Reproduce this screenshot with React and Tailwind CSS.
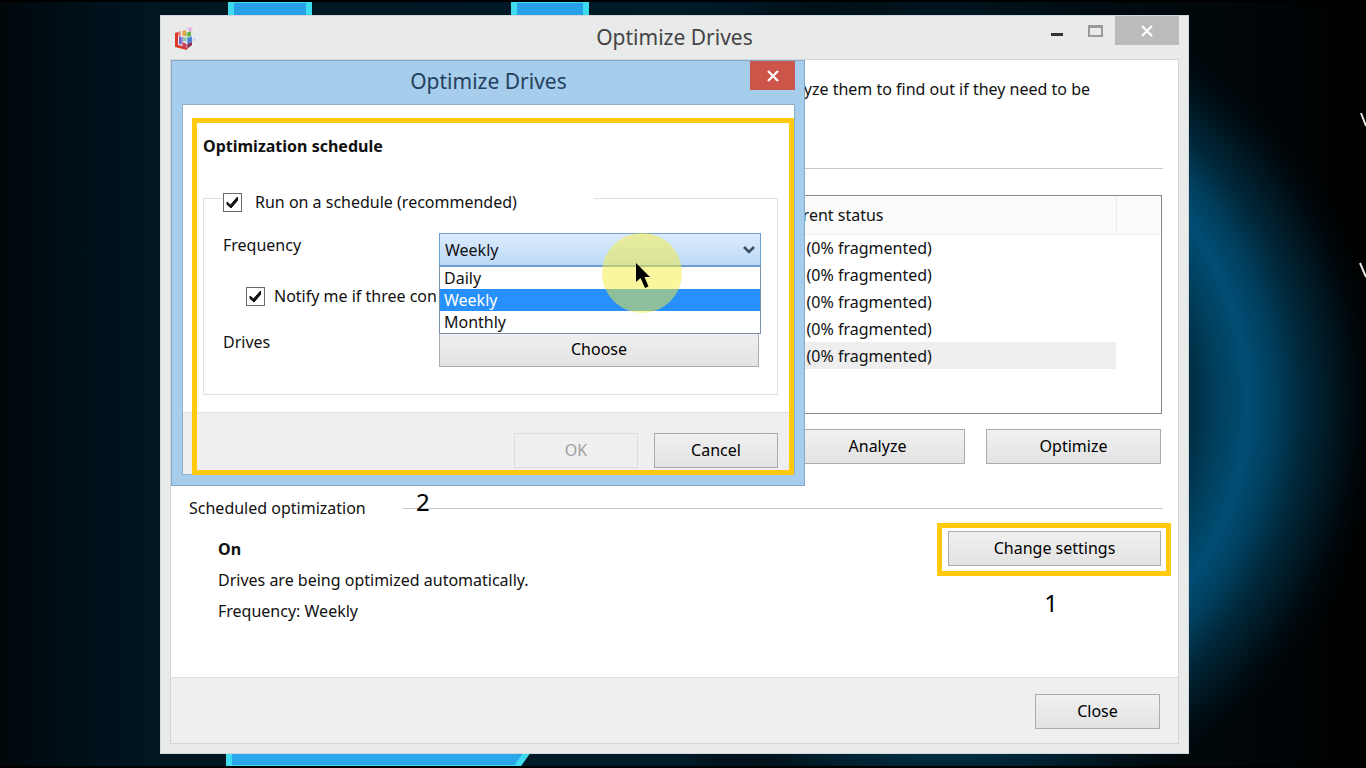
import React, { useState } from "react";

const drives = ["C", "D", "E", "F", "System"];
const frequencies = ["Daily", "Weekly", "Monthly"];

function PushButton({ className = "", children, ...props }) {
  return (
    <button
      className={`h-[35px] border border-[#acacac] bg-linear-to-b from-[#f0f0f0] to-[#e3e3e3] pb-[2px] text-center text-black disabled:border-[#dcdcdc] disabled:from-[#efefef] disabled:to-[#efefef] disabled:text-[#a0a0a0] ${className}`}
      {...props}
    >
      {children}
    </button>
  );
}

function CheckBox({ id, label, checked, onChange, className = "" }) {
  return (
    <div className={`flex items-center ${className}`}>
      <span className="relative block size-[19px]">
        <input
          id={id}
          type="checkbox"
          checked={checked}
          onChange={(e) => onChange(e.target.checked)}
          className="block size-[19px] appearance-none border border-[#6b6b6b] bg-white"
        />
        {checked && (
          <svg viewBox="0 0 19 19" className="pointer-events-none absolute inset-0">
            <path d="M4 9l3.500 3L14.500 4v3.500L8 15 4 11.500z" fill="#111" stroke="#111" />
          </svg>
        )}
      </span>
      <label htmlFor={id} className="whitespace-nowrap">
        {label}
      </label>
    </div>
  );
}

function Cross({ className }) {
  return (
    <svg viewBox="0 0 12 12" className={className}>
      <path d="M1 1l10 10M11 1L1 11" fill="none" stroke="currentColor" strokeWidth="2.200" />
    </svg>
  );
}

function DefragIcon() {
  return (
    <svg viewBox="0 0 24 24" className="size-6">
      <path d="M2 7l3-1v13l9 2v3L2 21z" fill="#d8392c" />
      <path d="M5 6l3-1v5l-3 1z" fill="#e8897c" />
      <path d="M6 10l4 1v8l-4-1z" fill="#6a62c8" />
      <path d="M9 5l4-1v6l-4 1z" fill="#e2a64a" />
      <path d="M13 7l5-2v6l-5 1z" fill="#62b04c" />
      <path d="M10 11l4 1v4l-4-1z" fill="#8cc8b0" />
      <path d="M14 12l5-2v6l-5 2z" fill="#4c7fd8" />
      <path d="M9 16l5 2v4l-5-1z" fill="#c2455c" />
      <path d="M14 18l5-2v3l-5 4z" fill="#8a2f58" />
      <path d="M5 10l14 1M9 5v15M14 7v15" stroke="#fff" strokeOpacity="0.600" fill="none" />
      <path d="M14 2l4-1 2 3-4 2z" fill="#e9b4e6" />
      <path d="M20 12l3 2-3 1z" fill="#b4cdf6" />
    </svg>
  );
}

function Wallpaper() {
  return (
    <svg
      className="absolute inset-0 h-full w-full"
      viewBox="0 0 1366 768"
      preserveAspectRatio="none"
      aria-hidden="true"
    >
      <defs>
        <linearGradient id="base">
          <stop offset="0" stopColor="#00070b" />
          <stop offset="0.060" stopColor="#001019" />
          <stop offset="0.120" stopColor="#001722" />
          <stop offset="0.500" stopColor="#001a28" />
          <stop offset="0.800" stopColor="#000c12" />
          <stop offset="1" stopColor="#000" />
        </linearGradient>
        <radialGradient id="ring" gradientUnits="userSpaceOnUse" cx="944" cy="402" r="440">
          <stop offset="0.450" stopColor="#001c2a" stopOpacity="0" />
          <stop offset="0.550" stopColor="#002a3e" />
          <stop offset="0.620" stopColor="#003f5c" />
          <stop offset="0.690" stopColor="#004d74" />
          <stop offset="0.750" stopColor="#003f5e" />
          <stop offset="0.820" stopColor="#002739" />
          <stop offset="0.900" stopColor="#00131c" />
          <stop offset="1" stopColor="#000508" stopOpacity="0" />
        </radialGradient>
      </defs>
      <rect width="1366" height="768" fill="url(#base)" />
      <rect width="1366" height="768" fill="url(#ring)" />
      <path d="M231 0h78v20h-78zM514 0h72v20h-72z" fill="#27a0e8" stroke="#3cdcec" strokeWidth="6" />
      <path d="M229 740h307l-20 28H229z" fill="#2ba6ea" stroke="#3fdcf0" strokeWidth="6" />
      <path d="M0 1h1366M0 767h1366" stroke="#000" strokeWidth="2" />
      <path d="M1361 113l5 13M1360 263l6 14" stroke="#e8e8e8" strokeWidth="2" />
    </svg>
  );
}

function ScheduleDialog() {
  const [enabled, setEnabled] = useState(true);
  const [notify, setNotify] = useState(true);
  const [frequency, setFrequency] = useState("Weekly");

  return (
    <section className="absolute left-0 top-0 flex h-[426px] w-[634px] flex-col border border-[#86a9c8] bg-[#a6cdec] pb-[10px] pl-[10px] pr-[9px]">
      <header className="relative flex h-[43px] justify-center pt-[6px]">
        <h2 className="text-[21px] leading-7 text-[#24405c]">Optimize Drives</h2>
        <button
          aria-label="Close dialog"
          className="absolute right-0 top-0 flex h-[29px] w-[45px] items-center justify-center bg-[#cc5549] text-white"
        >
          <Cross className="size-3" />
        </button>
      </header>

      <div className="flex flex-1 flex-col border border-[#8db0cd] bg-white">
        <div className="flex-1 pl-5 pr-4 pt-[29px]">
          <h3 className="font-bold leading-6">Optimization schedule</h3>

          <div className="mt-10 h-[197px] border border-[#dfdfdf] pl-[19px] pr-4">
            <div className="-mt-[9px] flex w-[371px] bg-white">
              <CheckBox
                id="run"
                label="Run on a schedule (recommended)"
                checked={enabled}
                onChange={setEnabled}
                className="gap-[13px]"
              />
            </div>

            <div className="mt-[19px] flex justify-between">
              <label htmlFor="frequency" className="leading-6">
                Frequency
              </label>
              <div className="relative w-[322px]">
                <select
                  id="frequency"
                  value={frequency}
                  onChange={(e) => setFrequency(e.target.value)}
                  className="block h-[34px] w-full appearance-none border border-b-2 border-[#6a9fd0] bg-linear-to-b from-[#dcebfc] to-[#bcdaf8] pl-[5px]"
                >
                  {frequencies.map((item) => (
                    <option key={item}>{item}</option>
                  ))}
                </select>
                <svg viewBox="0 0 12 8" className="absolute right-[6px] top-[13px] h-2 w-3">
                  <path d="M1 1l5 5 5-5" fill="none" stroke="#3c4f63" strokeWidth="2.600" />
                </svg>
                <ul className="absolute inset-x-0 top-[34px] z-10 border border-t-0 border-[#7d8fa3] bg-white">
                  {frequencies.map((item) => (
                    <li
                      key={item}
                      onClick={() => setFrequency(item)}
                      className={`h-[22px] pl-1 leading-[22px] ${item === frequency ? "bg-[#2790fb] text-white" : ""}`}
                    >
                      {item}
                    </li>
                  ))}
                </ul>
              </div>
            </div>

            <div className="mt-[17px] w-[215px] overflow-hidden pl-[23px]">
              <CheckBox
                id="notify"
                label="Notify me if three con"
                checked={notify}
                onChange={setNotify}
                className="gap-[9px]"
              />
            </div>

            <div className="mt-[24px] flex justify-between pr-[2px]">
              <span className="leading-5">Drives</span>
              <PushButton className="w-[320px]">Choose</PushButton>
            </div>
          </div>
        </div>

        <footer className="flex h-[62px] justify-end gap-4 border-t border-[#dfdfdf] bg-[#efefef] pr-4 pt-5">
          <PushButton disabled className="w-[124px]">
            OK
          </PushButton>
          <PushButton className="w-[124px]">Cancel</PushButton>
        </footer>
      </div>

      <div className="pointer-events-none absolute bottom-[10px] left-5 right-[10px] top-[57px] border-[5px] border-[#ffc90e]" />
      <div className="pointer-events-none absolute left-[430px] top-[172px] z-20 size-20 rounded-full bg-[#f5ee3c]/50" />
      <svg viewBox="0 0 14 26" className="pointer-events-none absolute left-[464px] top-[202px] z-20 h-[26px] w-[14px]">
        <path d="M0 0v19l4.500-4L9 25l3.500-1.500L8.500 14H14z" fill="#000" />
      </svg>
    </section>
  );
}

export default function App() {
  return (
    <div className="relative flex min-h-screen bg-black pb-[14px] pl-[160px] pr-[177px] pt-[15px] font-['Noto_Sans','Open_Sans',sans-serif] text-[16px] text-[#111]">
      <Wallpaper />

      <main className="relative flex flex-1 flex-col border border-[#d4d8dc] bg-[#e9eaea] px-[9px] pb-[9px]">
        <header className="relative flex h-[43px] justify-center pt-[7px]">
          <span className="absolute left-[3px] top-[10px]">
            <DefragIcon />
          </span>
          <h1 className="text-[21px] leading-7 text-[#444]">Optimize Drives</h1>
          <div className="absolute right-0 top-0 flex h-[29px]">
            <button aria-label="Minimize" className="flex w-[39px] justify-center pt-[17px]">
              <span className="h-[3px] w-3 bg-[#333]" />
            </button>
            <button aria-label="Maximize" className="flex w-[39px] justify-center pt-[9px]">
              <span className="h-3 w-[15px] border-2 border-t-3 border-[#999]" />
            </button>
            <button
              aria-label="Close window"
              className="flex w-[64px] items-center justify-center bg-[#bbb] text-white"
            >
              <Cross className="size-3" />
            </button>
          </div>
        </header>

        <div className="relative flex flex-1 flex-col border border-[#d5d5d5] bg-white">
          <section className="pl-[18px] pr-[15px] pt-[17px]">
            <p className="pr-[73px] text-right leading-6">analyze them to find out if they need to be</p>
            <hr className="mt-[67px] border-[#c8c8c8]" />

            <div className="mr-px mt-[26px] h-[219px] border border-[#828790]">
              <table className="w-full table-fixed border-collapse text-left">
                <colgroup>
                  <col />
                  <col className="w-[340px]" />
                  <col className="w-[45px]" />
                </colgroup>
                <thead>
                  <tr className="h-[38px] border-b border-[#eee] bg-[#fbfbfb]">
                    <th />
                    <th className="border-r border-[#eee] font-normal">Current status</th>
                    <th />
                  </tr>
                </thead>
                <tbody>
                  {drives.map((drive) => (
                    <tr key={drive} className="group h-[27px]">
                      <td className="group-last:bg-[#eee]" />
                      <td className="pl-1 group-last:bg-[#eee]">OK (0% fragmented)</td>
                      <td />
                    </tr>
                  ))}
                </tbody>
              </table>
            </div>

            <div className="mt-[15px] flex justify-end gap-[21px] pr-[2px]">
              <PushButton className="w-[175px]">Analyze</PushButton>
              <PushButton className="w-[175px] border-[#a3b3c3]">Optimize</PushButton>
            </div>

            <div className="mt-[32px] flex items-center gap-[37px]">
              <h2 className="leading-6">Scheduled optimization</h2>
              <hr className="flex-1 border-[#c8c8c8]" />
            </div>

            <div className="mt-[10px] flex items-start justify-between pl-[29px] pr-[2px]">
              <div>
                <p className="pt-[7px] font-bold leading-6">On</p>
                <p className="pt-[7px] leading-6">Drives are being optimized automatically.</p>
                <p className="pt-[7px] leading-6">Frequency: Weekly</p>
              </div>
              <div className="relative mt-px">
                <PushButton className="block w-[213px]">Change settings</PushButton>
                <div className="pointer-events-none absolute -bottom-[10px] -left-[11px] -right-[10px] -top-[8px] border-[5px] border-[#ffc90e]" />
              </div>
            </div>
          </section>

          <footer className="mt-auto flex h-[66px] justify-end border-t border-[#dfdfdf] bg-[#efefef] pr-[18px] pt-[16px]">
            <PushButton className="w-[125px] border-[#a3b3c3]">Close</PushButton>
          </footer>

          <ScheduleDialog />
          <span className="absolute left-[245px] top-[426px] text-[24px] leading-8 text-black">2</span>
          <span className="absolute right-[120px] top-[527px] text-[24px] leading-8 text-black">1</span>
        </div>
      </main>
    </div>
  );
}
